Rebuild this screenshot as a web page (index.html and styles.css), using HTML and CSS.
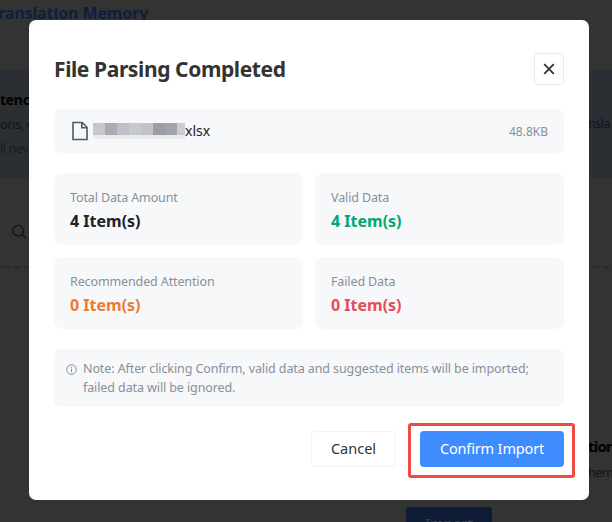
FILE: index.html
```html
<!DOCTYPE html>
<html lang="en">
<head>
<meta charset="utf-8">
<title>File Parsing Completed</title>
<link rel="stylesheet" href="styles.css">
</head>
<body>
<div class="page">
  <header class="page-head"><span class="page-title">ranslation Memory</span></header>
  <section class="banner">
    <div class="banner-row strong"><span>tenc</span></div>
    <div class="banner-row"><span>ons, w</span><span class="end">nsla</span></div>
    <div class="banner-row dim"><span>ll nev</span></div>
  </section>
  <div class="search">
    <svg width="16" height="16" viewBox="0 0 16 16" fill="none" stroke="#161616" stroke-width="1.4"><circle cx="7.2" cy="6.7" r="5.3"/><path d="M11 10.5l4 4"/></svg>
  </div>
  <div class="divider"></div>
  <section class="promo">
    <div class="promo-title">tion</div>
    <div class="promo-text">hem</div>
    <div class="promo-button"><span>Import</span></div>
  </section>
</div>
<div class="modal" role="dialog">
  <div class="modal-head">
    <h1><span>File Parsing Completed</span></h1>
    <button class="close" aria-label="Close"><svg width="12" height="12" viewBox="0 0 12 12" fill="none" stroke="#333" stroke-width="1.8"><path d="M1.2 1.2l9.6 9.6M10.8 1.2l-9.6 9.6"/></svg></button>
  </div>
  <div class="file">
    <svg class="file-icon" width="16" height="20" viewBox="0 0 16 20" fill="none" stroke="#4e5969" stroke-width="1.6"><path d="M1 1.5h9.2l4.8 4.8v12.2H1zM9.8 1.5v5.2H15"/></svg>
    <div class="mosaic"><i class="m1"></i><i class="m2"></i><i class="m3"></i><i class="m4"></i><i class="m5"></i><i class="m6"></i><i class="m7"></i><i class="m8"></i></div>
    <span class="file-ext">xlsx</span>
    <span class="file-size">48.8KB</span>
  </div>
  <div class="stats">
    <div class="stat"><div class="label">Total Data Amount</div><div class="value">4 Item(s)</div></div>
    <div class="stat"><div class="label">Valid Data</div><div class="value green">4 Item(s)</div></div>
    <div class="stat"><div class="label">Recommended Attention</div><div class="value orange">0 Item(s)</div></div>
    <div class="stat"><div class="label">Failed Data</div><div class="value red">0 Item(s)</div></div>
  </div>
  <div class="note">
    <svg width="11" height="11" viewBox="0 0 11 11" fill="none" stroke="#86909c"><circle cx="5.5" cy="5.5" r="4.8"/><path d="M5.5 4.7v3.6M5.5 2.7v1.1"/></svg>
    <p>Note: After clicking Confirm, valid data and suggested items will be imported;<br>failed data will be ignored.</p>
  </div>
  <div class="actions">
    <button class="btn cancel">Cancel</button>
    <div class="confirm-wrap"><button class="btn confirm">Confirm Import</button><div class="highlight"></div></div>
  </div>
</div>
</body>
</html>
```
FILE: styles.css
```css
* { box-sizing: border-box; }
body {
  margin: 0;
  width: 612px;
  height: 522px;
  overflow: hidden;
  background: #333;
  font-family: "Noto Sans", "Open Sans", sans-serif;
  font-size: 14px;
}
span, .label, .value, .note p { white-space: nowrap; }
h1, p { margin: 0; }
svg { display: block; flex: none; }
button { font-family: inherit; padding: 0; }

.page { height: 522px; overflow: hidden; display: flex; flex-direction: column; }
.page > * { flex: none; }
.page-head { height: 70px; line-height: 26px; }
.page-title { font-size: 16px; font-weight: 700; color: #0e1e3c; letter-spacing: -.1px; margin-left: -2px; }
.banner { height: 108px; padding-top: 18px; background: #2b2f34; color: #111417; }
.banner-row { height: 24px; line-height: 24px; font-size: 13px; letter-spacing: -.5px; display: flex; justify-content: space-between; }
.banner-row.strong { font-size: 14px; letter-spacing: -.3px; font-weight: 700; color: #000; }
.banner-row.dim { color: #171b20; }
.end { width: 24px; font-size: 12.5px; letter-spacing: -.6px; }
.search { height: 88px; padding: 46px 0 0 11px; }
.divider { height: 2px; background: repeating-linear-gradient(90deg, #262a35 0 6px, transparent 6px 10px); background-position: 4px 0; }
.promo-title, .promo-text { margin-left: 588px; width: 24px; }
.promo { padding-top: 165px; }
.promo-title { font-size: 15px; font-weight: 700; line-height: 26px; height: 26px; color: #000; letter-spacing: -.8px; }
.promo-text { font-size: 13px; line-height: 26px; height: 26px; color: #151515; letter-spacing: -.8px; }
.promo-button { width: 86px; height: 36px; margin: 22px 0 0 406px; border-radius: 3px; background: #0d1c34; color: #3b4353; text-align: center; font-size: 14.5px; line-height: 33px; }

.modal { position: absolute; left: 29px; top: 20px; width: 560px; height: 480px; padding: 33px 25px; background: #fff; border-radius: 7px; }
.modal-head { height: 32px; display: flex; align-items: center; justify-content: space-between; }
h1 { font-size: 21px; line-height: 32px; font-weight: 700; color: #333; letter-spacing: -.4px; }
.close { width: 30px; height: 32px; display: grid; place-items: center; background: #fff; border: 1px solid #ebebeb; border-radius: 4px; }
.file { height: 44px; margin-top: 24px; padding: 0 16px 0 18px; display: flex; align-items: center; background: #f7f8fa; border-radius: 6px; }
.mosaic { width: 92px; height: 16px; margin: 0 0 0 5px; display: flex; border-bottom: 4px solid #e9eaec; }
.mosaic i { width: 12px; flex: none; }
.m1 { background: #c7c6c9; } .m2 { background: #a9acb6; } .m3 { background: #c0bfc5; } .m4 { background: #c7cacd; }
.m5 { background: #c2c3c8; } .m6 { background: #9d9e9f; } .m7 { background: #a1a4ae; } .mosaic .m8 { width: 8px; background: #cbcdd3; }
.file-ext { font-size: 14px; line-height: 20px; margin-top: -1px; color: #1d2129; }
.file-size { margin-left: auto; font-size: 12px; color: #86909c; }
.stats { display: grid; grid-template-columns: 249px 249px; gap: 12px; margin-top: 20px; }
.stat { height: 72px; padding: 15px 16px; background: #f7f8fa; border-radius: 8px; }
.label { font-size: 12.5px; letter-spacing: -.12px; line-height: 20px; color: #86909c; }
.value { font-size: 16px; line-height: 24px; margin-top: 1px; font-weight: 700; color: #1d2129; }
.green { color: #00a870; }
.orange { color: #ed7b2f; }
.red { color: #e34d59; }
.note { height: 58px; margin-top: 20px; padding: 10px 12px; display: flex; gap: 6px; background: #f7f8fa; border-radius: 6px; color: #86909c; }
.note svg { margin-top: 5px; }
.note p { font-size: 12.5px; letter-spacing: -.1px; line-height: 19px; }
.actions { margin-top: 24px; display: flex; justify-content: flex-end; gap: 24px; }
.btn { display: block; height: 36px; border-radius: 4px; font-size: 14.5px; padding-bottom: 2px; }
.cancel { width: 85px; background: #fff; border: 1px solid #f3f3f5; color: #333; }
.confirm-wrap { position: relative; }
.confirm { width: 144px; border: 0; background: #3f8cff; color: #fff; letter-spacing: -.15px; }
.highlight { position: absolute; left: -12px; top: -8px; width: 167px; height: 55px; border: 3px solid #f04b41; border-radius: 3px; }
```
